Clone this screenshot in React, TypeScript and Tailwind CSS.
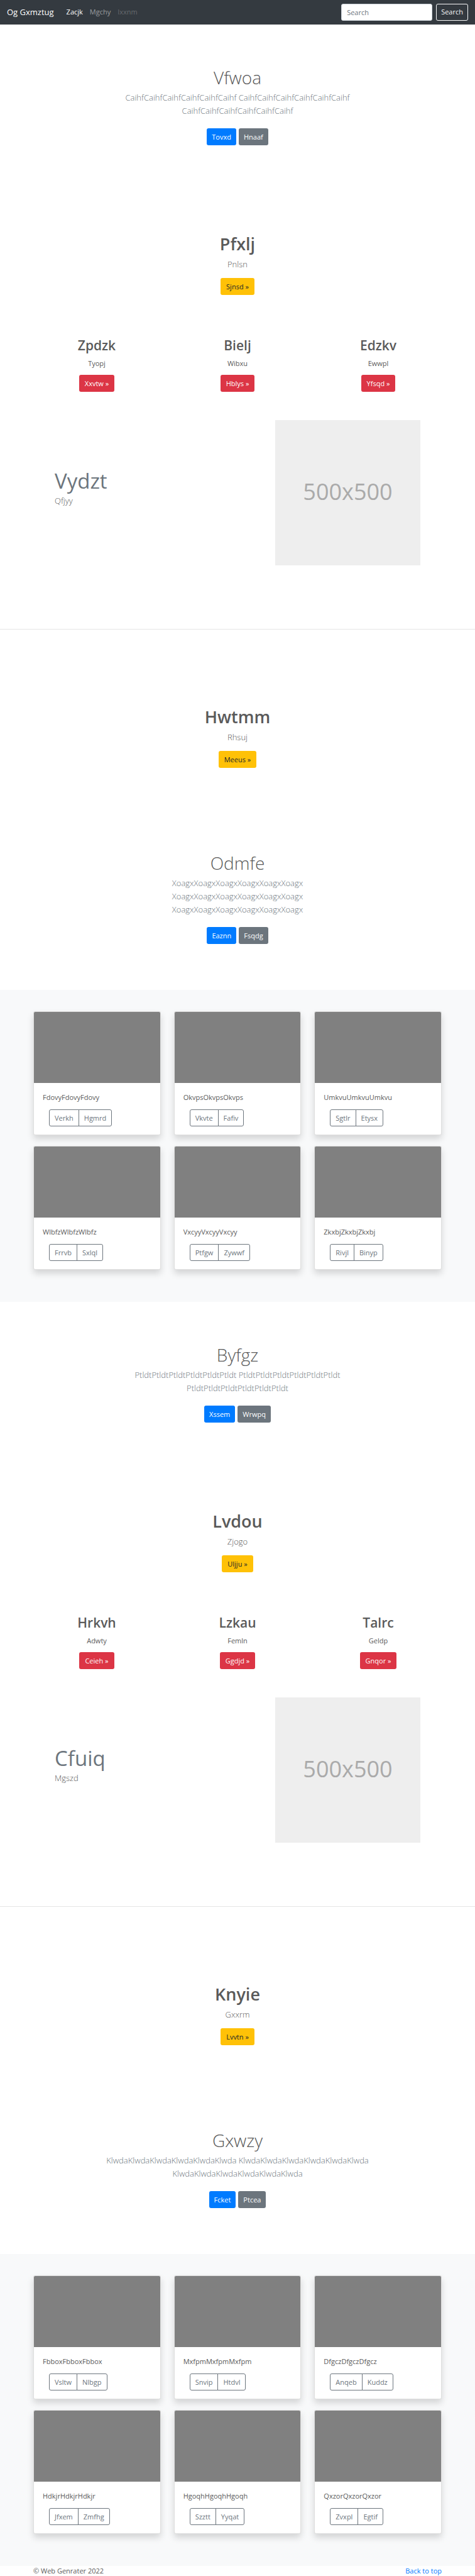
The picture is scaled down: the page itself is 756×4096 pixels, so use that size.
import type { ReactNode } from 'react';

type Pair = [string, string];
type Column = { title: string; text: string; action: string };
type Card = { text: string; actions: Pair };
type Lead = { title: string; lines: string[]; actions: Pair };

type BlockData = {
  hero: Lead;
  intro: Column;
  columns: Column[];
  feature: { title: string; text: string };
  outro: Column;
  gallery: Lead;
  cards: Card[];
};

const wide = (word: string) => [`${word.repeat(6)} ${word.repeat(6)}`, word.repeat(6)];
const narrow = (word: string) => [word.repeat(6), word.repeat(6), word.repeat(6)];

const card = (word: string, a: string, b: string): Card => ({
  text: word.repeat(3),
  actions: [a, b],
});

const blocks: BlockData[] = [
  {
    hero: { title: 'Vfwoa', lines: wide('Caihf'), actions: ['Tovxd', 'Hnaaf'] },
    intro: { title: 'Pfxlj', text: 'Pnlsn', action: 'Sjnsd »' },
    columns: [
      { title: 'Zpdzk', text: 'Tyopj', action: 'Xxvtw »' },
      { title: 'Bielj', text: 'Wibxu', action: 'Hblys »' },
      { title: 'Edzkv', text: 'Ewwpl', action: 'Yfsqd »' },
    ],
    feature: { title: 'Vydzt', text: 'Qfjyy' },
    outro: { title: 'Hwtmm', text: 'Rhsuj', action: 'Meeus »' },
    gallery: { title: 'Odmfe', lines: narrow('Xoagx'), actions: ['Eaznn', 'Fsqdg'] },
    cards: [
      card('Fdovy', 'Verkh', 'Hgmrd'),
      card('Okvps', 'Vkvte', 'Fafiv'),
      card('Umkvu', 'Sgtlr', 'Etysx'),
      card('Wlbfz', 'Frrvb', 'Sxlql'),
      card('Vxcyy', 'Ptfgw', 'Zywwf'),
      card('Zkxbj', 'Rivjl', 'Binyp'),
    ],
  },
  {
    hero: { title: 'Byfgz', lines: wide('Ptldt'), actions: ['Xssem', 'Wrwpq'] },
    intro: { title: 'Lvdou', text: 'Zjogo', action: 'Uljju »' },
    columns: [
      { title: 'Hrkvh', text: 'Adwty', action: 'Ceieh »' },
      { title: 'Lzkau', text: 'Femln', action: 'Ggdjd »' },
      { title: 'Talrc', text: 'Geldp', action: 'Gnqor »' },
    ],
    feature: { title: 'Cfuiq', text: 'Mgszd' },
    outro: { title: 'Knyie', text: 'Gxxrm', action: 'Lvvtn »' },
    gallery: { title: 'Gxwzy', lines: wide('Klwda'), actions: ['Fcket', 'Ptcea'] },
    cards: [
      card('Fbbox', 'Vsltw', 'Nlbgp'),
      card('Mxfpm', 'Snvip', 'Htdvl'),
      card('Dfgcz', 'Anqeb', 'Kuddz'),
      card('Hdkjr', 'Jfxem', 'Zmfhg'),
      card('Hgoqh', 'Szztt', 'Yyqat'),
      card('Qxzor', 'Zvxpl', 'Egtif'),
    ],
  },
];

const tones = {
  primary: 'bg-[#007bff] px-[8px] text-white',
  secondary: 'bg-[#6c757d] px-[8px] text-white',
  warning: 'bg-[#ffc107] px-[9px] text-[#212529]',
  danger: 'bg-[#dc3545] px-[9px] text-white',
};

function LinkButton({ tone, children }: { tone: keyof typeof tones; children: ReactNode }) {
  return (
    <a
      href="#"
      className={`inline-flex h-[27px] items-center rounded-[3px] text-[11px] leading-[17px] ${tones[tone]}`}
    >
      {children}
    </a>
  );
}

function Jumbotron({ title, lines, actions }: Lead) {
  return (
    <div className="flex flex-col items-center px-[20px] text-center">
      <h1 className="mb-[5px] text-[28px] font-light leading-[34px]">{title}</h1>
      <p className="mb-[17px] whitespace-pre-line text-[13px] font-light leading-[21px] text-[#6c757d]">
        {lines.join('\n')}
      </p>
      <div className="flex gap-[4px]">
        <LinkButton tone="primary">{actions[0]}</LinkButton>
        <LinkButton tone="secondary">{actions[1]}</LinkButton>
      </div>
    </div>
  );
}

function Callout({ title, text, action }: Column) {
  return (
    <div className="flex flex-col items-center text-center">
      <h1 className="mb-[5px] text-[27px] font-semibold leading-[34px]">{title}</h1>
      <p className="mb-[11px] text-[13px] font-light leading-[21px]">{text}</p>
      <LinkButton tone="warning">{action}</LinkButton>
    </div>
  );
}

function AlbumCard({ text, actions }: Card) {
  return (
    <article className="overflow-hidden rounded-[3px] border border-black/[.125] bg-white shadow-[0_6px_11px_rgba(0,0,0,0.15)]">
      <div className="h-[113px] bg-[#808080]" />
      <div className="px-[14px] pt-[14px] pb-[13px]">
        <p className="mb-[11px] text-[11px] leading-[17px]">{text}</p>
        <div className="ml-[10px] flex">
          <button
            type="button"
            className="h-[27px] rounded-l-[3px] border border-[#6c757d] px-[8px] text-[11px] leading-[17px] text-[#6c757d]"
          >
            {actions[0]}
          </button>
          <button
            type="button"
            className="-ml-px h-[27px] rounded-r-[3px] border border-[#6c757d] px-[8px] text-[11px] leading-[17px] text-[#6c757d]"
          >
            {actions[1]}
          </button>
        </div>
      </div>
    </article>
  );
}

function Block({ data }: { data: BlockData }) {
  return (
    <>
      <section className="pt-[67px]">
        <Jumbotron {...data.hero} />
      </section>

      <section className="pt-[140px]">
        <Callout {...data.intro} />
      </section>

      <section className="grid grid-cols-3 px-[42px] pt-[67px]">
        {data.columns.map((c) => (
          <div key={c.title} className="flex flex-col items-center text-center">
            <h2 className="mb-[6px] text-[21px] font-semibold leading-[27px]">{c.title}</h2>
            <p className="mb-[10px] text-[11px] leading-[17px]">{c.text}</p>
            <LinkButton tone="danger">{c.action}</LinkButton>
          </div>
        ))}
      </section>

      <section className="flex items-start justify-between px-[87px] pt-[45px] pb-[101px]">
        <div className="pt-[76px]">
          <h2 className="text-[33px] leading-[42px] text-[#6c757d]">{data.feature.title}</h2>
          <p className="text-[13px] font-light leading-[21px]">{data.feature.text}</p>
        </div>
        <div
          role="img"
          aria-label="500x500"
          className="flex size-[231px] items-center justify-center bg-[#eeeeee] pb-[3px] text-[36px] text-[#aaaaaa]"
        >
          500x500
        </div>
      </section>

      <hr className="border-black/10" />

      <section className="pt-[122px]">
        <Callout {...data.outro} />
      </section>

      <section className="pt-[134px] pb-[73px]">
        <Jumbotron {...data.gallery} />
      </section>

      <section className="grid grid-cols-3 gap-x-[21px] gap-y-[17px] bg-[#f8f9fa] px-[53px] pt-[34px] pb-[51px]">
        {data.cards.map((c) => (
          <AlbumCard key={c.text} {...c} />
        ))}
      </section>
    </>
  );
}

export default function App() {
  return (
    <div className="bg-white font-['Open_Sans','Noto_Sans',sans-serif] text-[#5a5a5a]">
      <nav className="flex h-[39px] items-center bg-[#343a40] px-[11px] text-[11px] text-white">
        <a href="#" className="mr-[20px] text-[13px]">
          Og Gxmztug
        </a>
        <div className="flex gap-[11px]">
          <a href="#">Zacjk</a>
          <a href="#" className="text-white/50">
            Mgchy
          </a>
          <a href="#" aria-disabled="true" className="text-white/25">
            Ixxnm
          </a>
        </div>
        <form className="ml-auto flex gap-[6px]" onSubmit={(e) => e.preventDefault()}>
          <input
            type="search"
            aria-label="Search"
            placeholder="Search"
            className="h-[27px] w-[145px] rounded-[3px] border border-[#ced4da] bg-white px-[8px] text-[11px] text-[#495057] placeholder:text-[#6c757d]"
          />
          <button
            type="submit"
            className="h-[27px] rounded-[3px] border border-[#f8f9fa] px-[7px] text-[11px] text-[#f8f9fa]"
          >
            Search
          </button>
        </form>
      </nav>

      <main>
        {blocks.map((b) => (
          <Block key={b.hero.title} data={b} />
        ))}
      </main>

      <footer className="flex justify-between px-[53px] text-[11px] leading-[16px]">
        <p>© Web Genrater 2022</p>
        <a href="#" className="text-[#007bff]">
          Back to top
        </a>
      </footer>
    </div>
  );
}
